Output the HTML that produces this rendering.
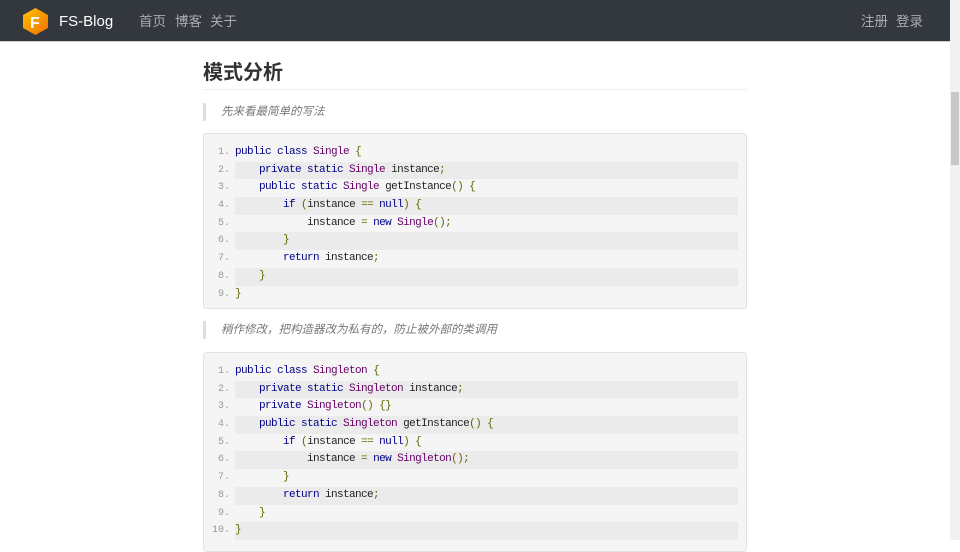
<!DOCTYPE html>
<html><head><meta charset="utf-8"><style>
*{margin:0;padding:0;box-sizing:border-box}
body{width:960px;height:540px;overflow:hidden;background:#fff;font-family:"Liberation Sans","Noto Sans CJK SC",sans-serif;position:relative}
.nav{position:absolute;left:0;top:0;width:950px;height:42px;background:#33373e;border-bottom:1px solid #ccc}
.nav span{position:absolute;top:13px;font-size:13.5px;line-height:17px;color:#a9acb0}
.brand{left:59px;color:#fff!important;font-size:15px!important;top:13px!important}
.sb{position:absolute;right:0;top:0;width:10px;height:540px;background:#f1f1f1}
.thumb{position:absolute;right:1px;top:92px;width:8px;height:73px;background:#c8c8c8}
h1{position:absolute;top:60px;left:203px;font-size:20px;line-height:26px;font-weight:bold;color:#333;width:544px;height:30px;border-bottom:1px solid #eee}
.q{position:absolute;left:203px;border-left:3px solid #ddd;padding-left:15px;font-style:italic;color:#777;font-size:11.5px;height:18px;line-height:18px}
.code{position:absolute;left:203px;width:544px;background:#f5f5f5;border:1px solid #e2e2e2;border-radius:3px;padding:9px 8px 6px 0}
.l{height:17.7px;line-height:17.7px;font-family:"Liberation Mono",monospace;font-size:11px;letter-spacing:-0.6px;white-space:pre;color:#222;position:relative;padding-left:31px;top:1px}
.l.e{background:#ebebeb;margin-left:31px;padding-left:0}
.l i{font-style:normal;position:absolute;left:0;width:26px;text-align:right;color:#999;font-size:10px;letter-spacing:0}
.l.e i{left:-31px}
.k{color:#000088}.c{color:#660066}.p{color:#666600}
</style></head><body>
<div class="nav">
<svg style="position:absolute;left:23px;top:8px" width="25" height="27" viewBox="0 0 25 27"><defs><linearGradient id="g" x1="0" y1="0" x2="1" y2="1"><stop offset="0" stop-color="#ffc400"/><stop offset="1" stop-color="#f07000"/></linearGradient></defs><polygon points="12.5,0 25,7 25,20 12.5,27 0,20 0,7" fill="url(#g)"/><text x="7" y="20" font-family="Liberation Sans" font-weight="bold" font-size="16" fill="#fff">F</text></svg>
<span class="brand">FS-Blog</span>
<span style="left:139px">首页</span><span style="left:175px">博客</span><span style="left:210px">关于</span>
<span style="left:861px">注册</span><span style="left:896px">登录</span>
</div>
<div class="sb"><div class="thumb"></div></div>
<h1>模式分析</h1>
<div class="q" style="top:103px">先来看最简单的写法</div>
<div class="code" style="top:133px">
<div class="l"><i>1.</i><span class="k">public class</span> <span class="c">Single</span> <span class="p">{</span></div>
<div class="l e"><i>2.</i>    <span class="k">private static</span> <span class="c">Single</span> instance<span class="p">;</span></div>
<div class="l"><i>3.</i>    <span class="k">public static</span> <span class="c">Single</span> getInstance<span class="p">() {</span></div>
<div class="l e"><i>4.</i>        <span class="k">if</span> <span class="p">(</span>instance <span class="p">==</span> <span class="k">null</span><span class="p">) {</span></div>
<div class="l"><i>5.</i>            instance <span class="p">=</span> <span class="k">new</span> <span class="c">Single</span><span class="p">();</span></div>
<div class="l e"><i>6.</i>        <span class="p">}</span></div>
<div class="l"><i>7.</i>        <span class="k">return</span> instance<span class="p">;</span></div>
<div class="l e"><i>8.</i>    <span class="p">}</span></div>
<div class="l"><i>9.</i><span class="p">}</span></div>
</div>
<div class="q" style="top:321px">稍作修改，把构造器改为私有的，防止被外部的类调用</div>
<div class="code" style="top:352px;height:200px">
<div class="l"><i>1.</i><span class="k">public class</span> <span class="c">Singleton</span> <span class="p">{</span></div>
<div class="l e"><i>2.</i>    <span class="k">private static</span> <span class="c">Singleton</span> instance<span class="p">;</span></div>
<div class="l"><i>3.</i>    <span class="k">private</span> <span class="c">Singleton</span><span class="p">() {}</span></div>
<div class="l e"><i>4.</i>    <span class="k">public static</span> <span class="c">Singleton</span> getInstance<span class="p">() {</span></div>
<div class="l"><i>5.</i>        <span class="k">if</span> <span class="p">(</span>instance <span class="p">==</span> <span class="k">null</span><span class="p">) {</span></div>
<div class="l e"><i>6.</i>            instance <span class="p">=</span> <span class="k">new</span> <span class="c">Singleton</span><span class="p">();</span></div>
<div class="l"><i>7.</i>        <span class="p">}</span></div>
<div class="l e"><i>8.</i>        <span class="k">return</span> instance<span class="p">;</span></div>
<div class="l"><i>9.</i>    <span class="p">}</span></div>
<div class="l e"><i>10.</i><span class="p">}</span></div>
</div>
</body></html>
